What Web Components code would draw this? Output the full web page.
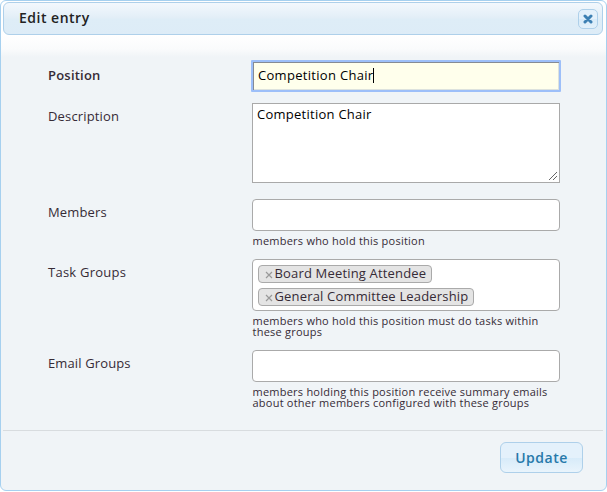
<!DOCTYPE html>
<html lang="en"><head><meta charset="utf-8"><title>Edit entry</title>
<style>
html,body{margin:0;height:100%;overflow:hidden;background:#fff}
body{font:13px/16px "Open Sans","Liberation Sans",sans-serif;color:#362b36}
</style></head><body>
<edit-dialog heading="Edit entry">
  <form-row label="Position" style="--h:43px;--weight:600;--ls:.22px;--label-top:7px"><text-field>Competition Chair</text-field></form-row>
  <form-row label="Description" style="--h:96px;--ls:.16px"><text-area>Competition Chair</text-area></form-row>
  <form-row label="Members" style="--h:60px"><select-box></select-box><field-note>members who hold this position</field-note></form-row>
  <form-row label="Task Groups" style="--h:91px;--ls:.25px"><select-box style="--box-h:52px"><tag-chip>Board Meeting Attendee</tag-chip><tag-chip>General Committee Leadership</tag-chip></select-box><field-note>members who hold this position must do tasks within<br>these groups</field-note></form-row>
  <form-row label="Email Groups" style="--h:80px;--ls:.13px"><select-box></select-box><field-note>members holding this position receive summary emails<br>about other members configured with these groups</field-note></form-row>
  <push-button slot="footer">Update</push-button>
</edit-dialog>
<script>
function define(name, html, setup) {
  const t = document.createElement('template');
  t.innerHTML = html;
  customElements.define(name, class extends HTMLElement {
    connectedCallback() {
      if (this.shadowRoot) return;
      const root = this.attachShadow({mode: 'open'});
      root.append(t.content.cloneNode(true));
      if (setup) setup(this, root);
    }
  });
}
define('edit-dialog', `<style>
:host{display:flex;flex-direction:column;box-sizing:border-box;width:607px;height:491px;padding:1px 3px 0 2px;border:1px solid #a6d0ef;border-radius:6px;background:linear-gradient(#fff 0,#fff 34px,#fafbfc 48px,#f0f4f7 56px)}
header{display:flex;align-items:center;justify-content:space-between;box-sizing:border-box;height:33px;flex:none;padding:0 4px 0 15px;border:1px solid #aed0ea;border-radius:6px;background:linear-gradient(#f3f8fd,#e2eef7 48%,#deedf7 52%,#ddecf7)}
h1{margin:0 0 1px;font-size:14px;line-height:20px;font-weight:600;letter-spacing:.5px;color:#222}
main{flex:none;padding:25px 0 0 44px;height:395px;box-sizing:border-box}
footer{display:flex;justify-content:flex-end;border-top:1px solid #d8dcdf;padding:11px 20px 0 0}
</style><header><h1></h1><close-button></close-button></header><main><slot></slot></main><footer><slot name="footer"></slot></footer>`,
(el, r) => r.querySelector('h1').textContent = el.getAttribute('heading'));
define('close-button', `<style>
:host{display:flex;align-items:center;justify-content:center;box-sizing:border-box;width:20px;height:20px;border:1px solid #aed0ea;border-radius:5px;background:linear-gradient(#e4f1fb 50%,#d7ebf9 50%,#e2f0fa)}
</style><svg width="10" height="10" viewBox="0 0 10 10"><path d="M2 2L8 8M8 2L2 8" stroke="#3d80b3" stroke-width="3" stroke-linecap="round"/></svg>`);
define('form-row', `<style>
:host{display:grid;grid-template-columns:203px 310px;column-gap:0;align-items:start;height:var(--h)}
label{padding:var(--label-top,5px) 0 0 1px;font-weight:var(--weight,400);letter-spacing:var(--ls,.15px)}
div{margin-left:1px}
</style><label></label><div><slot></slot></div>`,
(el, r) => r.querySelector('label').textContent = el.getAttribute('label'));
define('text-field', `<style>
:host{display:flex;align-items:center;box-sizing:border-box;width:310px;height:32px;padding:0 5px 2px;border:2px solid #9dbff9;border-radius:1px;background:#ffffec;color:#000;letter-spacing:.3px;box-shadow:inset 1px 1px #858b95,inset -1px -1px #dde2dd}
i{width:1px;height:15px;background:#000}
</style><slot></slot><i></i>`);
define('text-area', `<style>
:host{display:flex;justify-content:space-between;box-sizing:border-box;width:308px;height:80px;margin-left:1px;padding:2px 2px 1px 4px;border:1px solid #a9a9a9;background:#fff;color:#000;letter-spacing:.26px}
svg{align-self:flex-end}
</style><span><slot></slot></span><svg width="9" height="9" viewBox="0 0 9 9" shape-rendering="crispEdges"><path d="M.5 8.5L8.5 .5M4.5 8.5L8.5 4.5" stroke="#666"/></svg>`);
define('select-box', `<style>
:host{display:flex;flex-direction:column;align-items:flex-start;gap:5px;box-sizing:border-box;width:308px;height:var(--box-h,32px);margin-left:1px;padding:5px;border:1px solid #aaa;border-radius:4px;background:#fff}
</style><slot></slot>`);
define('tag-chip', `<style>
:host{display:flex;align-items:center;box-sizing:border-box;height:18px;padding:0 5px 2px 6px;border:1px solid #aaa;border-radius:4px;background:#e4e4e4;letter-spacing:.17px}
svg{margin:4px 1.5px 0 0}
</style><svg width="8" height="8" viewBox="0 0 8 8"><path d="M1 1L7 7M7 1L1 7" stroke="#999" stroke-width="1.2"/></svg><span><slot></slot></span>`);
define('field-note', `<style>
:host{display:block;margin:4px 0 0 1.5px;font-size:11px;line-height:11px;letter-spacing:.23px;white-space:nowrap}
</style><slot></slot>`);
define('push-button', `<style>
:host{display:flex;align-items:center;justify-content:center;box-sizing:border-box;width:83px;height:31px;border:1px solid #aed0ea;border-radius:6px;background:linear-gradient(#e4f1fb 50%,#d7ebf9 51%,#e9f4fc);color:#2779aa;font-size:14px;font-weight:600;letter-spacing:.5px}
</style><slot></slot>`);
</script></body></html>
